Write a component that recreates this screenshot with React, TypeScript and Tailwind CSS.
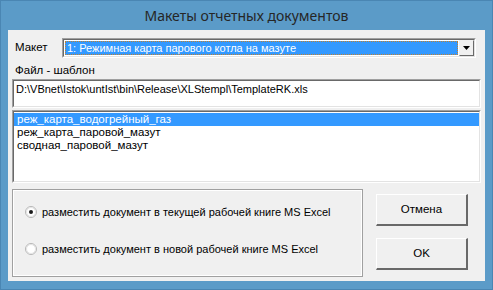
import React from "react";

const font = { fontFamily: '"Liberation Sans", Arial, sans-serif' };

function Radio({ checked }: { checked?: boolean }) {
  return (
    <svg width="12" height="12" viewBox="0 0 12 12" className="shrink-0">
      <circle cx="6" cy="6" r="5.5" fill="#ffffff" stroke="#b5b5b5" />
      <circle cx="6" cy="6" r="4.5" fill="none" stroke="#e3e3e3" />
      {checked && <circle cx="6" cy="6" r="2" fill="#1a1a1a" />}
    </svg>
  );
}

function Button({ children, className }: { children: React.ReactNode; className?: string }) {
  return (
    <div className={`w-[92px] h-[32px] border-t border-l border-t-white border-l-white border-b-2 border-r-2 border-b-[#696969] border-r-[#696969] bg-[#f0f0f0] flex items-center justify-center text-[11.5px] text-black ${className ?? ""}`}>
      {children}
    </div>
  );
}

export default function App() {
  return (
    <div className="w-[493px] h-[290px] bg-[#5b9bc8] flex flex-col border border-[#4a86b3] overflow-hidden" style={font}>
      <div className="h-[29px] flex items-center justify-center text-[14px] text-[#262626]" style={{ fontFamily: '"Noto Sans", "Open Sans", sans-serif' }}>
        Макеты отчетных документов
      </div>
      <div className="mx-[7px] h-[251px] bg-[#f0f0f0] flex flex-col px-[4px] text-[11px] text-black">
        {/* combo row */}
        <div className="flex items-center mt-[8px] h-[20px]">
          <div className="w-[50px] pl-[3px] text-[11.5px]">Макет</div>
          <div className="w-[414px] h-[20px] border-t border-l border-t-[#a0a0a0] border-l-[#a0a0a0] border-b border-r border-b-white border-r-white">
            <div className="h-full border-t border-l border-t-[#696969] border-l-[#696969] border-b border-r border-b-[#e3e3e3] border-r-[#e3e3e3] bg-white flex items-center">
              <div className="flex-1 h-[14px] ml-[1px] mr-[1px] bg-[#3399ff] text-white text-[11px] leading-[12px] pl-[1px] border border-dotted border-[#c08030] whitespace-nowrap overflow-hidden">
                1: Режимная карта парового котла на мазуте
              </div>
              <div className="w-[15px] h-[16px] bg-[#f0f0f0] border-t border-l border-t-[#f0f0f0] border-l-[#f0f0f0] border-b border-r border-b-[#696969] border-r-[#696969] flex items-center justify-center">
                <svg width="7" height="4" viewBox="0 0 7 4">
                  <polygon points="0,0 7,0 3.5,4" fill="#000" />
                </svg>
              </div>
            </div>
          </div>
        </div>
        {/* file label */}
        <div className="mt-[5px] pl-[3px] text-[11.5px] h-[14px] leading-[14px]">Файл - шаблон</div>
        {/* textbox */}
        <div className="mt-[2px] h-[29px] border-t border-l border-t-[#a0a0a0] border-l-[#a0a0a0] border-b border-r border-b-white border-r-white">
          <div className="h-full border-t border-l border-t-[#696969] border-l-[#696969] border-b border-r border-b-[#e3e3e3] border-r-[#e3e3e3] bg-white pl-[2px] pt-[1px] text-[11px] leading-[14px] whitespace-nowrap">
            D:\VBnet\Istok\untIst\bin\Release\XLStempl\TemplateRK.xls
          </div>
        </div>
        {/* list */}
        <div className="mt-[2px] h-[73px] border-t border-l border-t-[#a0a0a0] border-l-[#a0a0a0] border-b border-r border-b-white border-r-white">
          <div className="h-full border-t border-l border-t-[#696969] border-l-[#696969] border-b border-r border-b-[#e3e3e3] border-r-[#e3e3e3] bg-white pt-[1px] text-[11.5px] leading-[13px]">
            <div className="bg-[#3399ff] text-white pl-[3px] h-[13px]">реж_карта_водогрейный_газ</div>
            <div className="pl-[3px] h-[13px]">реж_карта_паровой_мазут</div>
            <div className="pl-[3px] h-[13px]">сводная_паровой_мазут</div>
          </div>
        </div>
        {/* bottom */}
        <div className="flex mt-[6px]">
          <div className="w-[351px] h-[88px] border border-[#a0a0a0] flex flex-col">
            <div className="flex-1 border border-white flex flex-col pl-[11px]">
              <div className="flex items-center gap-[5px] mt-[14px] h-[14px] text-[11px]">
                <Radio checked />
                <span>разместить документ в текущей рабочей книге MS Excel</span>
              </div>
              <div className="flex items-center gap-[5px] mt-[23px] h-[14px] text-[11px]">
                <Radio />
                <span>разместить документ в новой рабочей книге MS Excel</span>
              </div>
            </div>
          </div>
          <div className="flex flex-col ml-[13px] mt-[5px]">
            <Button>Отмена</Button>
            <Button className="mt-[12px]">OK</Button>
          </div>
        </div>
      </div>
    </div>
  );
}
